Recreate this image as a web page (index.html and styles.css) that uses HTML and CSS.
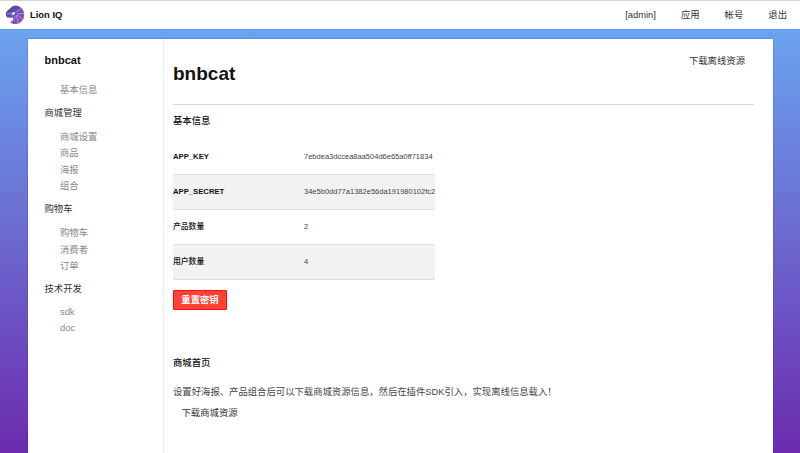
FILE: index.html
```
<!DOCTYPE html>
<html lang="zh-CN">
<head>
<meta charset="utf-8">
<title>Lion IQ</title>
<link rel="stylesheet" href="styles.css">
</head>
<body>
<header class="topbar">
  <a class="brand">
    <svg class="logo" viewBox="0 0 20 20">
      <defs><linearGradient id="mane" x1="0" y1="0" x2="1" y2="1"><stop offset="0" stop-color="#4c3a90"/><stop offset=".5" stop-color="#6c50b8"/><stop offset="1" stop-color="#a84cc6"/></linearGradient></defs>
      <path fill="url(#mane)" d="M.8 8 2.500 5.500 4.500 4 7 1.500 10 .6 13.500 1 16.500 3 18.500 6 19.200 10 18.500 14 16 17 12.500 19 8.500 19 5 17.500 8 14.500 8 12.500 5 12.800 2.500 12.500 1 11Z"/>
      <path fill="none" stroke="#fff" stroke-opacity=".65" stroke-width=".6" d="M2 9.500 5.500 8 8 8.500M12 9 15 8.500 19 8.500M12 10 15 12 18 15M11 10 12.500 14 13 19M10 11 9.500 14 6.500 17.500M11 7 14 5 16 3.500"/>
      <path fill="#fff" d="M6.500 8 10.500 7 9 9.800 6 10.500 8 9Z"/>
    </svg>
    <span>Lion IQ</span>
  </a>
  <nav class="topnav"><a>[admin]</a><a>应用</a><a>帐号</a><a>退出</a></nav>
</header>
<div class="panel">
  <aside class="sidebar">
    <h3>bnbcat</h3>
    <ul><li>基本信息</li></ul>
    <h4>商城管理</h4>
    <ul><li>商城设置</li><li>商品</li><li>海报</li><li>组合</li></ul>
    <h4>购物车</h4>
    <ul><li>购物车</li><li>消费者</li><li>订单</li></ul>
    <h4>技术开发</h4>
    <ul class="latin"><li>sdk</li><li>doc</li></ul>
  </aside>
  <main class="content">
    <div class="heading"><h1>bnbcat</h1><a>下载离线资源</a></div>
    <h2>基本信息</h2>
    <table>
      <tr><th>APP_KEY</th><td>7ebdea3dccea8aa504d6e65a0ff71834</td></tr>
      <tr><th>APP_SECRET</th><td>34e5b0dd77a1382e56da191980102fc2</td></tr>
      <tr><th class="cjk">产品数量</th><td>2</td></tr>
      <tr><th class="cjk">用户数量</th><td>4</td></tr>
    </table>
    <button class="reset">重置密钥</button>
    <h2 class="home">商城首页</h2>
    <p>设置好海报、产品组合后可以下载商城资源信息，然后在插件SDK引入，实现离线信息载入！</p>
    <a class="download">下载商城资源</a>
  </main>
</div>
</body>
</html>
```
FILE: styles.css
```
* { box-sizing: border-box; }
body {
  margin: 0;
  height: 453px;
  overflow: hidden;
  display: flex;
  flex-direction: column;
  background: linear-gradient(#6ba4f0 29px, #6c2bad 453px);
  color: #333;
  font: 9.35px/16px "Liberation Sans", "Noto Sans CJK SC", sans-serif;
}
h1, h2, h3, h4, p, ul { margin: 0; padding: 0; }
li { list-style: none; }
.topbar {
  flex: none;
  height: 30px;
  padding: 0 13px 0 5px;
  display: flex;
  align-items: center;
  justify-content: space-between;
  background: #fff;
  border-top: 1px solid #d5d5d5;
  border-bottom: 1px solid #6598ec;
}
.brand {
  display: flex;
  align-items: center;
  gap: 5px;
  color: #111;
  font-weight: bold;
  font-size: 9.4px;
}
.logo { width: 20px; height: 20px; }
.topnav { display: flex; gap: 25px; }
.panel {
  flex: 1;
  margin: 9px 27px 0 28px;
  display: flex;
  background: #fff;
  box-shadow: 0 0 1px #3a22c8;
}
.sidebar {
  width: 135.5px;
  padding: 13px 0 0 16.5px;
  border-right: 1px solid #eee;
}
.sidebar h3 { color: #111; font-size: 11px; }
.sidebar ul { padding: 8px 0 7px 15.5px; color: #888; }
.sidebar h3 + ul { padding-top: 14px; }
.sidebar .latin { padding-top: 7px; }
.sidebar li { height: 16.5px; line-height: 16.5px; }
.sidebar h4 { font-size: 9.35px; font-weight: normal; height: 15.3px; line-height: 15.3px; }
.content { flex: 1; padding: 0 19px 0 9.5px; }
.heading {
  height: 66px;
  padding: 14px 9px 0 0;
  display: flex;
  justify-content: space-between;
  border-bottom: 1px solid #d8d8d8;
}
.heading h1 { padding-top: 9px; color: #111; font-size: 19px; line-height: 24px; }
h2 { font-size: 9.35px; font-weight: 500; color: #111; line-height: 16px; }
.heading + h2 { margin: 8px 0 11px; }
table {
  width: 262px;
  table-layout: fixed;
  border-collapse: separate;
  border-spacing: 0;
  font-size: 7.53px;
}
th, td { height: 35px; padding: 0; text-align: left; border-bottom: 1px solid #e0e0e0; white-space: nowrap; line-height: 12px; }
td { color: #444; }
th { color: #111; font-size: 7.7px; }
th.cjk { font-size: 7.8px; font-weight: 500; }
tr:nth-child(even) { background: #f2f2f2; }
.reset {
  display: block;
  width: 54px;
  height: 20px;
  margin-top: 10px;
  padding: 0;
  color: #fff;
  background: #ff4136;
  border: 1px solid #ff1008;
  border-radius: 1px;
  font: bold 9.35px/16px "Liberation Sans", "Noto Sans CJK SC", sans-serif;
}
.home { margin-top: 45px; }
p { margin-top: 13px; color: #444; }
.download { display: block; margin: 5px 0 0 8.5px; }
```
